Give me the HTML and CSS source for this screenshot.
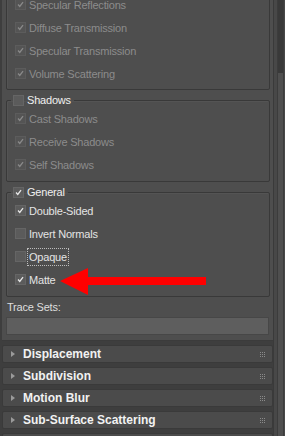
FILE: index.html
```html
<!DOCTYPE html>
<html>
<head>
<meta charset="utf-8">
<link rel="stylesheet" href="styles.css">
</head>
<body>
<div class="app">
  <div class="main">
    <div class="panel">
      <div class="group first">
        <div class="row dis"><span class="cb on"><svg viewBox="0 0 11 11"><path d="M2.5 5.5 L4.6 7.8 L8.6 2.6"/></svg></span><span class="lbl">Specular Reflections</span></div>
        <div class="row dis"><span class="cb on"><svg viewBox="0 0 11 11"><path d="M2.5 5.5 L4.6 7.8 L8.6 2.6"/></svg></span><span class="lbl">Diffuse Transmission</span></div>
        <div class="row dis"><span class="cb on"><svg viewBox="0 0 11 11"><path d="M2.5 5.5 L4.6 7.8 L8.6 2.6"/></svg></span><span class="lbl">Specular Transmission</span></div>
        <div class="row dis"><span class="cb on"><svg viewBox="0 0 11 11"><path d="M2.5 5.5 L4.6 7.8 L8.6 2.6"/></svg></span><span class="lbl">Volume Scattering</span></div>
      </div>
      <fieldset class="group fs">
        <legend class="legend"><span class="cb"></span><span class="lbl">Shadows</span></legend>
        <div class="row dis"><span class="cb on"><svg viewBox="0 0 11 11"><path d="M2.5 5.5 L4.6 7.8 L8.6 2.6"/></svg></span><span class="lbl">Cast Shadows</span></div>
        <div class="row dis"><span class="cb on"><svg viewBox="0 0 11 11"><path d="M2.5 5.5 L4.6 7.8 L8.6 2.6"/></svg></span><span class="lbl">Receive Shadows</span></div>
        <div class="row dis"><span class="cb on"><svg viewBox="0 0 11 11"><path d="M2.5 5.5 L4.6 7.8 L8.6 2.6"/></svg></span><span class="lbl">Self Shadows</span></div>
      </fieldset>
      <fieldset class="group fs">
        <legend class="legend"><span class="cb on"><svg viewBox="0 0 11 11"><path d="M2.5 5.5 L4.6 7.8 L8.6 2.6"/></svg></span><span class="lbl">General</span></legend>
        <div class="row"><span class="cb on"><svg viewBox="0 0 11 11"><path d="M2.5 5.5 L4.6 7.8 L8.6 2.6"/></svg></span><span class="lbl">Double-Sided</span></div>
        <div class="row"><span class="cb"></span><span class="lbl">Invert Normals</span></div>
        <div class="row"><span class="cb"></span><span class="lbl focus">Opaque</span></div>
        <div class="row"><span class="cb on"><svg viewBox="0 0 11 11"><path d="M2.5 5.5 L4.6 7.8 L8.6 2.6"/></svg></span><span class="lbl">Matte</span></div>
      </fieldset>
      <div class="trace-label">Trace Sets:</div>
      <div class="trace-input"></div>
    </div>
    <div class="rollout"><span class="tri"></span><span class="title">Displacement</span><svg class="grip" viewBox="0 0 5 5"><rect x="0" y="0" width="1" height="1"/><rect x="2" y="0" width="1" height="1"/><rect x="4" y="0" width="1" height="1"/><rect x="0" y="2" width="1" height="1"/><rect x="2" y="2" width="1" height="1"/><rect x="4" y="2" width="1" height="1"/><rect x="0" y="4" width="1" height="1"/><rect x="2" y="4" width="1" height="1"/><rect x="4" y="4" width="1" height="1"/></svg></div>
    <div class="rollout"><span class="tri"></span><span class="title">Subdivision</span><svg class="grip" viewBox="0 0 5 5"><rect x="0" y="0" width="1" height="1"/><rect x="2" y="0" width="1" height="1"/><rect x="4" y="0" width="1" height="1"/><rect x="0" y="2" width="1" height="1"/><rect x="2" y="2" width="1" height="1"/><rect x="4" y="2" width="1" height="1"/><rect x="0" y="4" width="1" height="1"/><rect x="2" y="4" width="1" height="1"/><rect x="4" y="4" width="1" height="1"/></svg></div>
    <div class="rollout"><span class="tri"></span><span class="title">Motion Blur</span><svg class="grip" viewBox="0 0 5 5"><rect x="0" y="0" width="1" height="1"/><rect x="2" y="0" width="1" height="1"/><rect x="4" y="0" width="1" height="1"/><rect x="0" y="2" width="1" height="1"/><rect x="2" y="2" width="1" height="1"/><rect x="4" y="2" width="1" height="1"/><rect x="0" y="4" width="1" height="1"/><rect x="2" y="4" width="1" height="1"/><rect x="4" y="4" width="1" height="1"/></svg></div>
    <div class="rollout"><span class="tri"></span><span class="title">Sub-Surface Scattering</span><svg class="grip" viewBox="0 0 5 5"><rect x="0" y="0" width="1" height="1"/><rect x="2" y="0" width="1" height="1"/><rect x="4" y="0" width="1" height="1"/><rect x="0" y="2" width="1" height="1"/><rect x="2" y="2" width="1" height="1"/><rect x="4" y="2" width="1" height="1"/><rect x="0" y="4" width="1" height="1"/><rect x="2" y="4" width="1" height="1"/><rect x="4" y="4" width="1" height="1"/></svg></div>
    <div class="rollout"><span class="tri"></span><span class="title"></span></div>
  </div>
  <div class="scrollbar"><div class="track"><div class="thumb"></div></div></div>
  <svg class="arrow" viewBox="0 0 150 30" width="150" height="30"><polygon points="0,13 28,0 28,9 146,9 146,17 28,17 28,27"/></svg>
</div>
</body>
</html>
```
FILE: styles.css
```css
html, body {
  margin: 0;
  padding: 0;
}
body {
  background: #3e3e3e;
  font-family: "Liberation Sans", Arial, sans-serif;
  font-size: 11px;
  letter-spacing: -0.2px;
  color: #e4e4e4;
  overflow: hidden;
}
.app {
  position: relative;
  display: flex;
  width: 285px;
  height: 436px;
  overflow: hidden;
}
.main {
  width: 273px;
  display: flex;
  flex-direction: column;
}
.panel {
  margin-left: 2px;
  background: #4e4e4e;
  border-bottom: 1px solid #3b3b3b;
  padding: 0 3px 5px 4px;
  display: flex;
  flex-direction: column;
}
.group {
  border: 1px solid #393939;
  border-radius: 2px;
  box-shadow: inset 1px 1px 0 #545454;
}
.first {
  margin-top: -11px;
  padding: 3px 0 4px 0;
}
.fs {
  margin: 3px 0 0 0;
  padding: 0 0 5px 0;
  min-width: 0;
}
.legend {
  margin-left: 4px;
  padding: 0 2px;
  height: 14px;
  display: flex;
  align-items: center;
  color: #f0f0f0;
}
.row {
  height: 23px;
  display: flex;
  align-items: center;
  padding-left: 8px;
}
.cb {
  width: 11px;
  height: 11px;
  box-sizing: border-box;
  background: #5b5b5b;
  border: 1px solid #656565;
  display: inline-flex;
  flex: none;
}
.cb svg {
  width: 9px;
  height: 9px;
}
.cb svg path {
  fill: none;
  stroke: #e8e8e8;
  stroke-width: 1.6;
}
.lbl {
  margin-left: 2px;
  padding: 0 1px;
  line-height: 14px;
}
.dis .lbl {
  color: #8c8c8c;
}
.dis .cb {
  background: #545454;
  border-color: #5c5c5c;
}
.dis .cb svg path {
  stroke: #8a8a8a;
}
.focus {
  border: 1px dotted #bdbdbd;
  padding: 1px 1px;
  margin-left: 1px;
}
.trace-label {
  margin-top: 3px;
  margin-left: 1px;
  line-height: 14px;
  color: #dedede;
}
.trace-input {
  margin-top: 3px;
  height: 18px;
  box-sizing: border-box;
  background: #5e5e5e;
  border: 1px solid #474747;
  margin-right: 1px;
}
.rollout {
  margin: 4px 0 0 2px;
  height: 18px;
  box-sizing: border-box;
  background: #4b4b4b;
  border: 1px solid #3a3a3a;
  border-radius: 2px;
  display: flex;
  align-items: center;
  flex: none;
}
.tri {
  width: 0;
  height: 0;
  border-left: 4px solid #9a9a9a;
  border-top: 3px solid transparent;
  border-bottom: 3px solid transparent;
  margin-left: 8px;
}
.title {
  margin-left: 8px;
  font-weight: bold;
  font-size: 12px;
  letter-spacing: 0;
  color: #f2f2f2;
  flex: 1;
}
.grip {
  width: 5px;
  height: 5px;
  margin-right: 7px;
  fill: #8a8a8a;
}
.scrollbar {
  width: 12px;
  box-sizing: border-box;
  background: #484848;
  border-left: 1px solid #3a3a3a;
  padding-left: 3px;
}
.track {
  width: 7px;
  height: 100%;
  box-sizing: border-box;
  border-left: 1px solid #3c3c3c;
  border-right: 1px solid #3c3c3c;
  background: #4f4f4f;
}
.thumb {
  height: 73px;
  background: #393939;
}
.arrow {
  position: absolute;
  left: 60px;
  top: 268px;
  fill: #ff0000;
}
```
